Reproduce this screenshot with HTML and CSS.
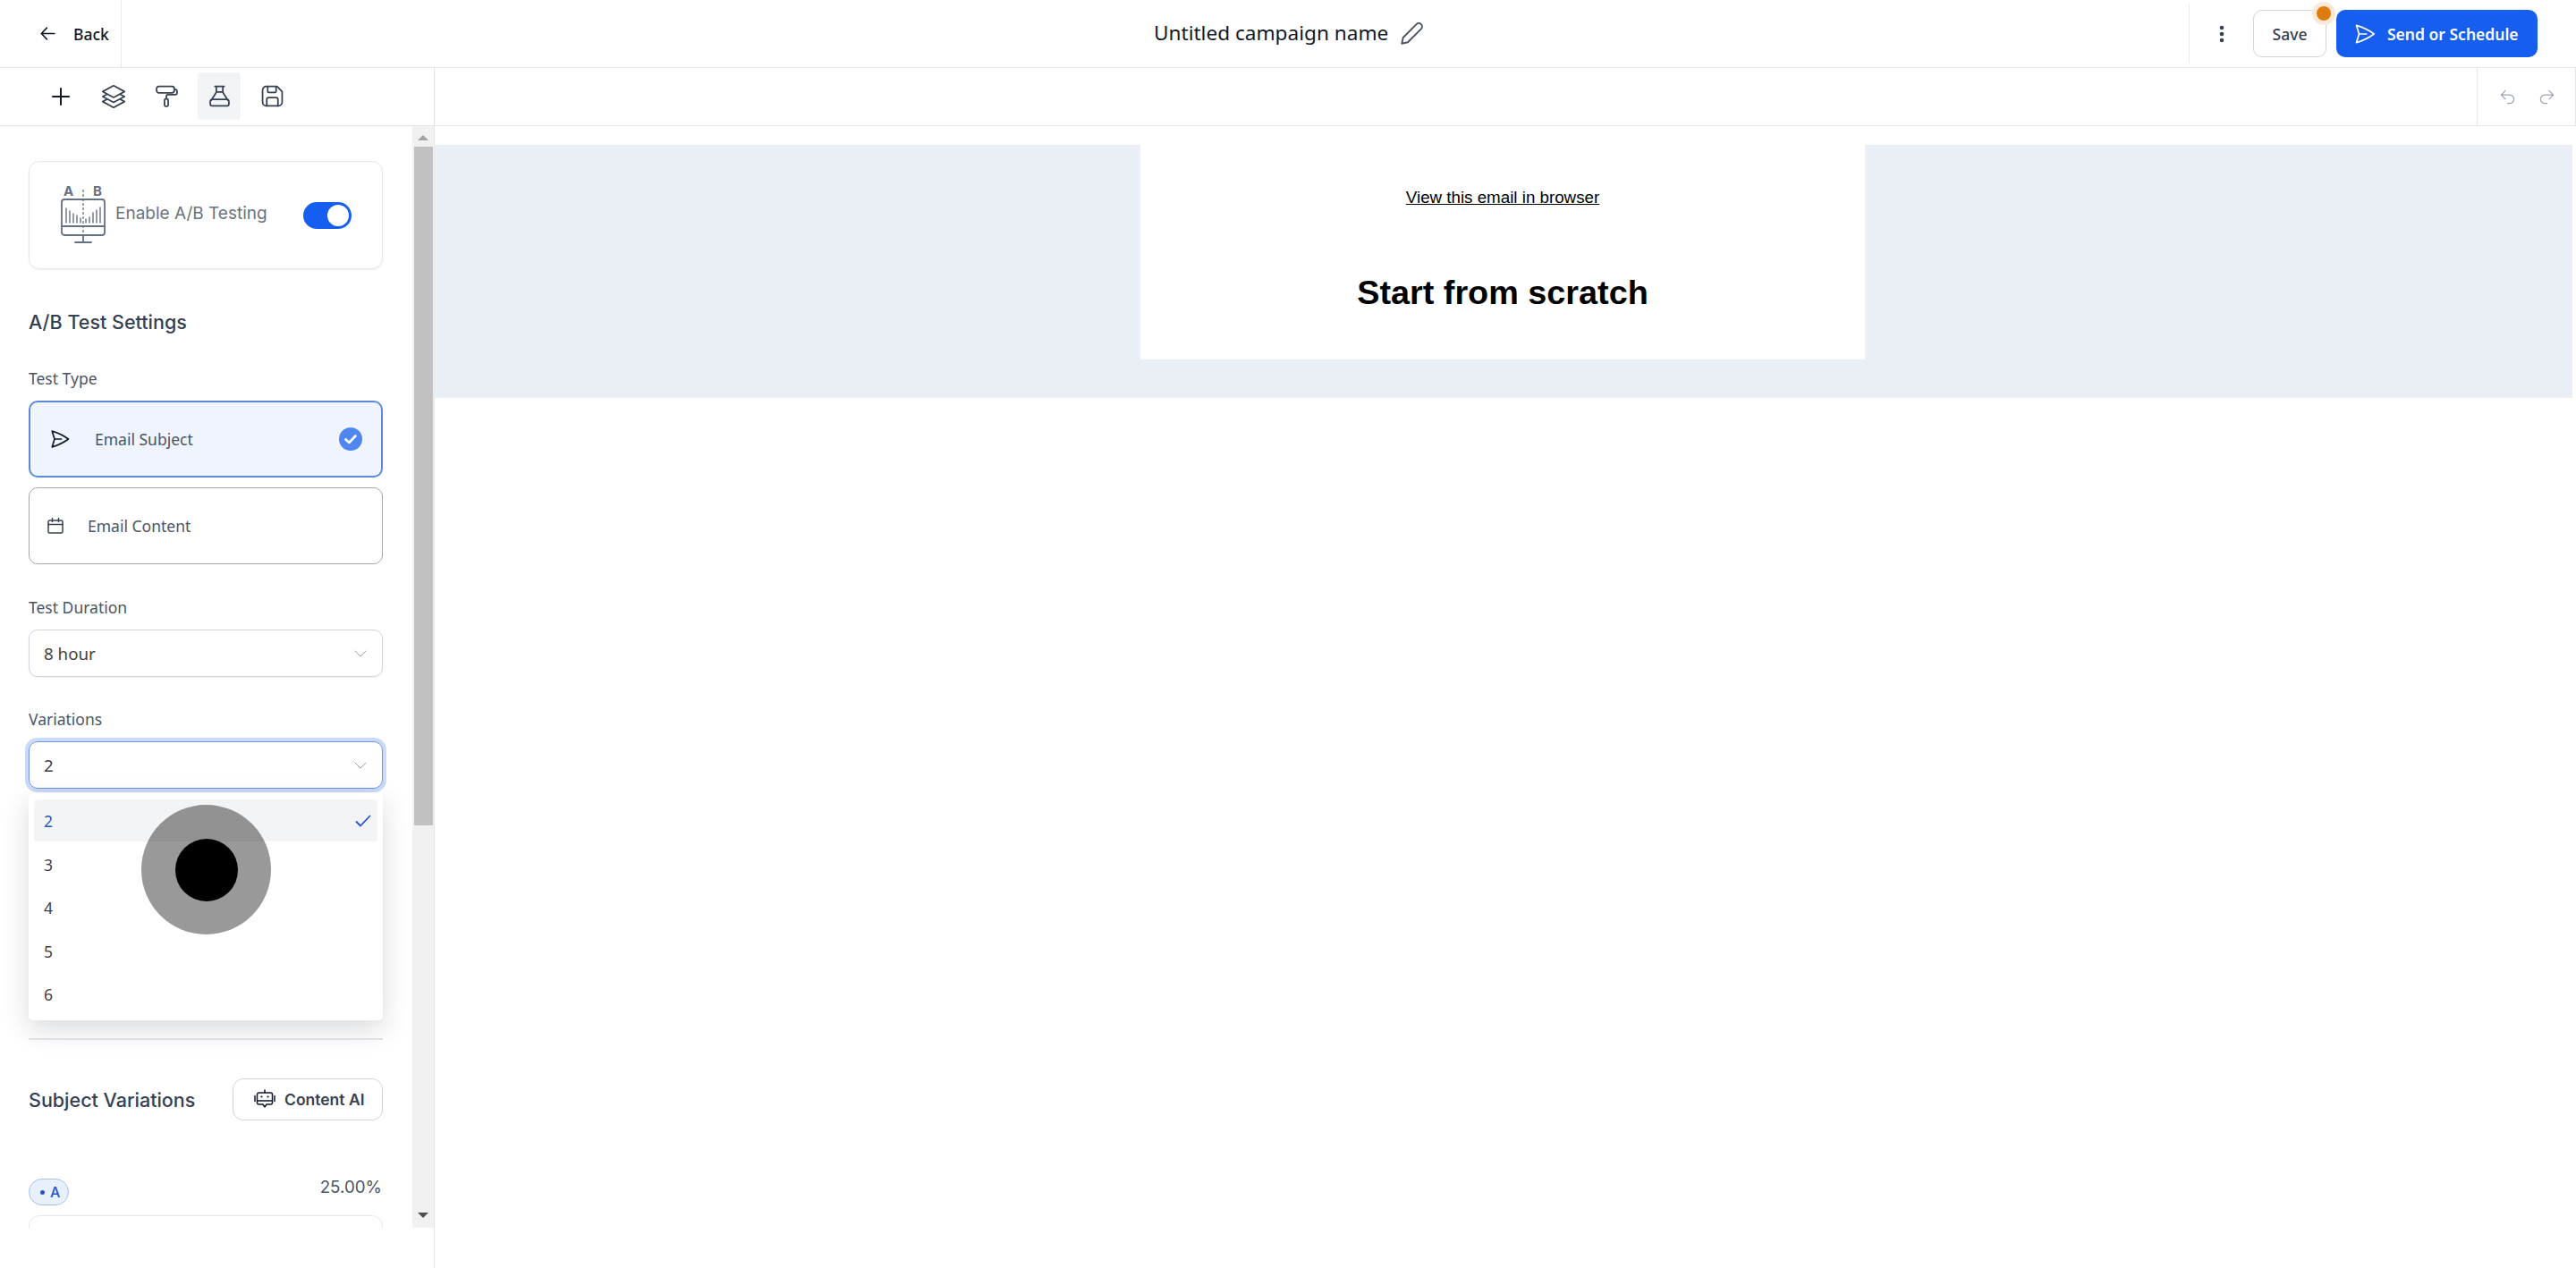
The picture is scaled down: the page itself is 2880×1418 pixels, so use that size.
FILE: index.html
```html
<!DOCTYPE html>
<html lang="en">
<head>
    <meta charset="UTF-8">
    <meta name="viewport" content="width=device-width, initial-scale=1.0">
    <title>Untitled campaign name</title>
    <link rel="stylesheet" href="styles.css">
</head>
<body>
    <header class="topbar">
        <a class="back">
            <svg class="back-icon" viewBox="0 0 16 16"><path d="M15 8H1.500M7 2 1.200 8 7 14"/></svg>
            <span>Back</span>
        </a>
        <div class="title">
            <span>Untitled campaign name</span>
            <svg class="pencil" viewBox="0 0 24 24"><path d="M2 22l1.300-6L16.500 2.800a3.200 3.200 0 0 1 4.700 4.700L8 20.700z"/></svg>
        </div>
        <div class="actions">
            <svg class="dots" viewBox="0 0 6 20"><circle cx="3" cy="3" r="2.300"/><circle cx="3" cy="10" r="2.300"/><circle cx="3" cy="17" r="2.300"/></svg>
            <button class="save-btn">Save<span class="notify"></span></button>
            <button class="send-btn">
                <svg viewBox="0 0 24 24"><path d="M6 12L3.269 3.126A59.768 59.768 0 0 1 21.485 12 59.77 59.77 0 0 1 3.27 20.876L5.999 12zm0 0h7.500"/></svg>
                Send or Schedule
            </button>
        </div>
    </header>

    <div class="workspace">
        <aside class="sidebar">
            <nav class="tools">
                <span class="tool tool-plus"><svg viewBox="0 0 20 20"><path d="M10 1v18M1 10h18"/></svg></span>
                <span class="tool tool-layers"><svg viewBox="0 0 24 24"><path d="M6.429 9.750L2.250 12l4.179 2.250m0-4.500l5.571 3 5.571-3m-11.142 0L2.250 7.500 12 2.250l9.750 5.250-4.179 2.250m0 0L21.750 12l-4.179 2.250m0 0l4.179 2.250L12 21.750 2.250 16.500l4.179-2.250m11.142 0l-5.571 3-5.571-3"/></svg></span>
                <span class="tool"><svg viewBox="0 0 24 24"><rect x="1" y="1.500" width="19" height="7" rx="2.500"/><path d="M20 5h1.500a1.500 1.500 0 0 1 1.500 1.500v2a2 2 0 0 1-2 2h-8a1.500 1.500 0 0 0-1.500 1.500v2"/><rect x="9.500" y="15" width="4" height="8" rx="1.500"/></svg></span>
                <span class="tool tool-active"><svg viewBox="0 0 24 24"><path d="M7 1.500h10M8.500 1.500v6.500L3 16.500M15.500 1.500v6.500L21 16.500M8.500 7.500h7M4.500 15.500h15a2.500 2.500 0 0 1 2.500 2.500v2.500a2 2 0 0 1-2 2H4a2 2 0 0 1-2-2V18a2.500 2.500 0 0 1 2.500-2.500z"/></svg></span>
                <span class="tool"><svg viewBox="0 0 24 24"><path d="M5.500 1.500h11.500l5.500 5.500v11.500a4 4 0 0 1-4 4h-13a4 4 0 0 1-4-4v-13a4 4 0 0 1 4-4z"/><path d="M7 1.500v5.500a1 1 0 0 0 1 1h7a1 1 0 0 0 1-1V2M6 22.500v-7a2 2 0 0 1 2-2h8a2 2 0 0 1 2 2v7"/></svg></span>
            </nav>

            <div class="panel">
                <div class="panel-body">
                    <div class="ab-card">
                        <svg class="ab-icon" viewBox="0 -4 50 68">
                            <text x="3" y="11" class="ab-letter">A</text>
                            <text x="36" y="11" class="ab-letter">B</text>
                            <rect x="1" y="15" width="48" height="40" rx="3"/>
                            <path d="M1 45h48M25 55v8M16 63h18"/>
                            <path class="ab-dash" d="M25 4v51"/>
                            <path class="ab-bars" d="M6 41V25M10 41V28M14 41V31M18 41V33M22 41V36M28 41V37M32 41V35M36 41V30M40 41V27M44 41V24"/>
                        </svg>
                        <span class="ab-label">Enable A/B Testing</span>
                        <span class="toggle"><span class="toggle-knob"></span></span>
                    </div>

                    <h2 class="settings-title">A/B Test Settings</h2>

                    <div class="field-label type-label">Test Type</div>
                    <div class="type-option type-selected">
                        <svg class="type-send" viewBox="0 0 24 24"><path d="M6 12L3.269 3.126A59.768 59.768 0 0 1 21.485 12 59.77 59.770 0 0 1 3.270 20.876L5.999 12zm0 0h7.500"/></svg>
                        <span>Email Subject</span>
                        <svg class="type-check" viewBox="0 0 26 26"><circle cx="13" cy="13" r="13"/><path d="M7.500 13.500l3.800 3.500 7.200-7.500"/></svg>
                    </div>
                    <div class="type-option">
                        <svg class="type-cal" viewBox="0 0 18 18"><rect x="1" y="3" width="16" height="14" rx="1.500"/><path d="M1 7.500h16M5.500 .5v4M12.500 .5v4"/></svg>
                        <span>Email Content</span>
                    </div>

                    <div class="field-label duration-label">Test Duration</div>
                    <div class="select">
                        <span>8 hour</span>
                        <svg class="chevron" viewBox="0 0 14 8"><path d="M1 1l6 6 6-6"/></svg>
                    </div>

                    <div class="field-label variations-label">Variations</div>
                    <div class="select select-focus">
                        <span>2</span>
                        <svg class="chevron" viewBox="0 0 14 8"><path d="M1 1l6 6 6-6"/></svg>
                    </div>

                    <hr class="divider">

                    <div class="subject-head">
                        <h2>Subject Variations</h2>
                        <button class="ai-btn">
                            <svg viewBox="0 0 24 24"><path d="M3.500 6a2 2 0 0 1 2-2h13a2 2 0 0 1 2 2v9a2 2 0 0 1-2 2h-4.500l-2 3-2-3H5.500a2 2 0 0 1-2-2zM12 4V1M3.500 13h17M1 7.500v6M23 7.500v6"/><circle class="ai-eye" cx="8.500" cy="8.500" r="1.100"/><circle class="ai-eye" cx="15.500" cy="8.500" r="1.100"/></svg>
                            Content AI
                        </button>
                    </div>

                    <div class="variant-head">
                        <span class="badge"><i></i>A</span>
                        <span class="percent">25.00%</span>
                    </div>
                    <div class="variant-box"></div>
                </div>

                <div class="scrollbar">
                    <span class="arrow-up"></span>
                    <span class="thumb"></span>
                    <span class="arrow-down"></span>
                </div>

                <ul class="menu">
                    <li class="menu-current">2<svg viewBox="0 0 18 14"><path d="M1.500 8l4.500 4.500L16.500 1.500"/></svg></li>
                    <li>3</li>
                    <li>4</li>
                    <li>5</li>
                    <li>6</li>
                </ul>
            </div>
        </aside>

        <main class="canvas">
            <div class="history">
                <div class="history-btns">
                    <svg viewBox="0 0 24 24"><path d="M9 15L3 9m0 0l6-6M3 9h12a6 6 0 0 1 0 12h-3"/></svg>
                    <svg viewBox="0 0 24 24"><path d="M15 15l6-6m0 0l-6-6m6 6H9a6 6 0 0 0 0 12h3"/></svg>
                </div>
            </div>
            <div class="email-band">
                <div class="email">
                    <a class="email-link">View this email in browser</a>
                    <h1>Start from scratch</h1>
                </div>
            </div>
        </main>
    </div>

    <div class="tap"><div class="tap-core"></div></div>
</body>
</html>
```

FILE: styles.css
```css
* {
    box-sizing: border-box;
}
body {
    margin: 0;
    height: 1418px;
    overflow: hidden;
    background: #fff;
    font-family: "Noto Sans", Arial, sans-serif;
    color: #374151;
}
svg {
    display: block;
    fill: none;
    stroke: currentColor;
    stroke-linecap: round;
    stroke-linejoin: round;
}

/* top bar */
.topbar {
    display: flex;
    align-items: center;
    height: 76px;
    border-bottom: 1px solid #e5e7eb;
    position: relative;
}
.back {
    display: flex;
    align-items: center;
    gap: 20px;
    width: 136px;
    height: 75px;
    padding: 0 0 0 45px;
    border-right: 1px solid #e9eaec;
    font-size: 17.500px;
    font-weight: 500;
    color: #111827;
}
.back-icon {
    width: 17px;
    height: 17px;
    stroke-width: 1.500;
}
.title {
    display: flex;
    align-items: center;
    gap: 13px;
    margin-left: 1154px;
    font-size: 22.600px;
    color: #111827;
    line-height: 1;
}
.pencil {
    width: 27px;
    height: 27px;
    stroke-width: 1.700;
    color: #4b5563;
}
.actions {
    display: flex;
    align-items: center;
    height: 67px;
    margin-left: auto;
    padding: 0 43px 0 33px;
    border-left: 1px solid #e9eaec;
}
.dots {
    width: 6px;
    height: 20px;
    fill: #374151;
    stroke: none;
    margin-right: 32px;
}
.save-btn {
    position: relative;
    width: 82px;
    height: 53px;
    margin-right: 11px;
    background: #fff;
    border: 1px solid #d1d5db;
    border-radius: 10px;
    font: 500 17.500px "Noto Sans", Arial, sans-serif;
    color: #374151;
}
.notify {
    position: absolute;
    top: -5px;
    right: -6px;
    width: 16px;
    height: 16px;
    border-radius: 50%;
    background: #dd7c0c;
    box-shadow: 0 0 0 5px #fae9d6;
}
.send-btn {
    display: flex;
    align-items: center;
    gap: 12px;
    width: 225px;
    height: 53px;
    padding: 0 0 0 19px;
    background: #155eef;
    border: 0;
    border-radius: 10px;
    font: 600 17.500px "Noto Sans", Arial, sans-serif;
    color: #fff;
}
.send-btn svg {
    width: 26px;
    height: 26px;
    stroke-width: 1.600;
}

/* work area */
.workspace {
    display: flex;
    height: 1342px;
}
.sidebar {
    position: relative;
    width: 486px;
    flex: none;
    border-right: 1px solid #e5e7eb;
}
.tools {
    display: flex;
    align-items: center;
    height: 65px;
    padding: 0 0 1px 44px;
    gap: 11px;
    border-bottom: 1px solid #e5e7eb;
    box-shadow: 0 1px 3px rgba(0, 0, 0, .06);
}
.tool {
    display: flex;
    align-items: center;
    justify-content: center;
    width: 48px;
    height: 53px;
    border-radius: 4px;
    color: #374151;
}
.tool svg {
    width: 25px;
    height: 25px;
    stroke-width: 1.700;
}
.tool-plus {
    color: #111827;
}
.tool-plus svg {
    width: 20px;
    height: 20px;
    stroke-width: 2;
}
.tool-layers svg {
    width: 30px;
    height: 30px;
    stroke-width: 1.400;
}
.tool-active {
    background: #f3f4f6;
}
.panel {
    position: relative;
    display: flex;
    height: 1232px;
    overflow: hidden;
}
.panel-body {
    width: 461px;
    flex: none;
    padding: 39px 33px 0 32px;
}

/* scrollbar */
.scrollbar {
    display: flex;
    flex-direction: column;
    align-items: center;
    width: 24px;
    padding-top: 2px;
    background: #f1f1f1;
}
.arrow-up,
.arrow-down {
    width: 0;
    height: 0;
    border-left: 6px solid transparent;
    border-right: 6px solid transparent;
}
.arrow-up {
    margin: 8px 0 7px;
    border-bottom: 6px solid #a3a3a3;
}
.thumb {
    width: 21px;
    height: 759px;
    background: #c1c1c1;
}
.arrow-down {
    margin-top: auto;
    margin-bottom: 11px;
    border-top: 6px solid #505050;
}

/* a/b card */
.ab-card {
    display: flex;
    align-items: center;
    height: 121px;
    padding: 0 34px 0 35px;
    border: 1px solid #e5e7eb;
    border-radius: 12px;
    box-shadow: 0 1px 2px rgba(16, 24, 40, .08);
}
.ab-icon {
    width: 50px;
    height: 68px;
    margin: -6px 12px 0 0;
    color: #667085;
    stroke-width: 1.800;
}
.ab-letter {
    font: 700 15px Inter, sans-serif;
    fill: #667085;
    stroke: none;
}
.ab-dash {
    stroke-dasharray: 3 2;
    stroke-linecap: butt;
    stroke-width: 1.300;
}
.ab-bars {
    stroke-width: 1.400;
}
.ab-label {
    flex: 1;
    margin: -4px 0 0 -1px;
    font: 400 19px Inter, sans-serif;
    color: #6b7280;
}
.toggle {
    display: block;
    width: 54px;
    height: 30px;
    padding: 3px 3px 3px 27px;
    border-radius: 15px;
    background: #155eef;
}
.toggle-knob {
    display: block;
    width: 24px;
    height: 24px;
    border-radius: 50%;
    background: #fff;
}

/* settings form */
h2 {
    margin: 0;
    font: 500 21.500px Inter, sans-serif;
    color: #344054;
}
.settings-title {
    margin-top: 46px;
    line-height: 26px;
}
.field-label {
    font-size: 17.500px;
    line-height: 22px;
    color: #4b5563;
}
.type-label {
    margin-top: 39px;
}
.type-option {
    display: flex;
    align-items: center;
    height: 86px;
    margin-top: 14px;
    padding: 0 20px;
    border: 1px solid #a3a7ad;
    border-radius: 10px;
    font-size: 17.500px;
    color: #4b5563;
}
.type-option + .type-option {
    margin-top: 11px;
}
.type-selected {
    margin-top: 14px;
    padding: 0 21px 0 21px;
    border: 2px solid #5a8ade;
    background: #eff4fe;
}
.type-send {
    width: 24px;
    height: 24px;
    margin-right: 27px;
    color: #111827;
    stroke-width: 1.700;
}
.type-check {
    width: 26px;
    height: 26px;
    margin-left: auto;
}
.type-check circle {
    fill: #4f86f0;
    stroke: none;
}
.type-check path {
    stroke: #fff;
    stroke-width: 2.600;
}
.type-cal {
    width: 18px;
    height: 18px;
    margin-right: 27px;
    stroke-width: 1.500;
    color: #374151;
}
.duration-label {
    margin-top: 37px;
}
.select {
    display: flex;
    align-items: center;
    justify-content: space-between;
    height: 53px;
    margin-top: 14px;
    padding: 0 17px 0 16px;
    border: 1px solid #d0d5dd;
    border-radius: 10px;
    box-shadow: 0 1px 2px rgba(16, 24, 40, .06);
    font-size: 18.750px;
    color: #3f3f46;
}
.chevron {
    width: 14px;
    height: 8px;
    stroke-width: 1;
    color: #9ca3af;
}
.variations-label {
    margin-top: 36px;
}
.select-focus {
    margin-top: 14px;
    border-color: #6c96de;
    box-shadow: 0 0 0 4px #c9dafa;
}

/* options menu */
.menu {
    position: absolute;
    top: 746px;
    left: 32px;
    width: 396px;
    height: 254px;
    margin: 0;
    padding: 7px 6px;
    list-style: none;
    background: #fff;
    border-radius: 5px;
    box-shadow: 0 10px 30px rgba(16, 24, 40, .16);
    font-size: 17.500px;
    color: #3f3f46;
}
.menu li {
    display: flex;
    align-items: center;
    justify-content: space-between;
    height: 48.500px;
    padding: 0 7px 0 11px;
    border-radius: 4px;
}
.menu .menu-current {
    height: 47px;
    margin-bottom: 1.500px;
    background: #f3f4f6;
    color: #2a5bb8;
}
.menu svg {
    width: 18px;
    height: 14px;
    stroke-width: 1.800;
    color: #2257c9;
}
.divider {
    height: 2px;
    margin: 279px 0 0;
    border: 0;
    background: #e5e7eb;
}
.subject-head {
    display: flex;
    align-items: center;
    justify-content: space-between;
    margin-top: 43px;
}
.ai-btn {
    display: flex;
    align-items: center;
    gap: 10px;
    width: 168px;
    height: 47px;
    padding: 0 0 0 23px;
    background: #fff;
    border: 1px solid #d0d5dd;
    border-radius: 12px;
    font: 600 17.500px Inter, sans-serif;
    color: #374151;
}
.ai-btn svg {
    width: 24px;
    height: 24px;
    color: #111827;
    stroke-width: 1.500;
}
.ai-eye {
    fill: #111827;
    stroke: none;
}
.variant-head {
    display: flex;
    align-items: flex-start;
    justify-content: space-between;
    margin-top: 65px;
}
.badge {
    display: flex;
    align-items: center;
    gap: 6px;
    width: 45px;
    height: 30px;
    padding-left: 12px;
    border: 1px solid #a9c1ea;
    border-radius: 15px;
    background: #e8f0fc;
    font: 500 16px Inter, sans-serif;
    color: #2257c9;
}
.badge i {
    width: 5px;
    height: 5px;
    border-radius: 50%;
    background: #2257c9;
}
.percent {
    margin: -2px 1px 0 0;
    font: 400 18.750px Inter, sans-serif;
    color: #4b5563;
}
.variant-box {
    height: 40px;
    margin-top: 11px;
    border: 1px solid #e5e7eb;
    border-radius: 12px;
}

/* canvas */
.canvas {
    flex: 1;
    min-width: 0;
}
.history {
    display: flex;
    justify-content: flex-end;
    height: 65px;
    border-bottom: 1px solid #e5e7eb;
    border-right: 1px solid #e5e7eb;
}
.history-btns {
    display: flex;
    align-items: center;
    gap: 25px;
    width: 110px;
    padding-left: 24px;
    border-left: 1px solid #e5e7eb;
    color: #9ca3af;
}
.history-btns svg {
    width: 19px;
    height: 19px;
    stroke-width: 1.500;
}
.email-band {
    display: flex;
    justify-content: center;
    width: 2390px;
    height: 283px;
    margin-top: 21px;
    padding-right: 2px;
    background: #eaeff6;
}
.email {
    width: 810px;
    height: 240px;
    background: #fff;
    text-align: center;
    font-family: "Liberation Sans", Arial, sans-serif;
    color: #000;
}
.email-link {
    display: block;
    margin-top: 48px;
    font-size: 18.750px;
    line-height: 22px;
    text-decoration: underline;
}
.email h1 {
    margin: 72px 0 0;
    font-size: 37.800px;
    line-height: 46px;
}

/* touch marker */
.tap {
    position: absolute;
    left: 158px;
    top: 900px;
    display: flex;
    align-items: center;
    justify-content: center;
    width: 145px;
    height: 145px;
    border-radius: 50%;
    background: rgba(0, 0, 0, .4);
}
.tap-core {
    width: 70px;
    height: 70px;
    border-radius: 50%;
    background: #000;
}
```
